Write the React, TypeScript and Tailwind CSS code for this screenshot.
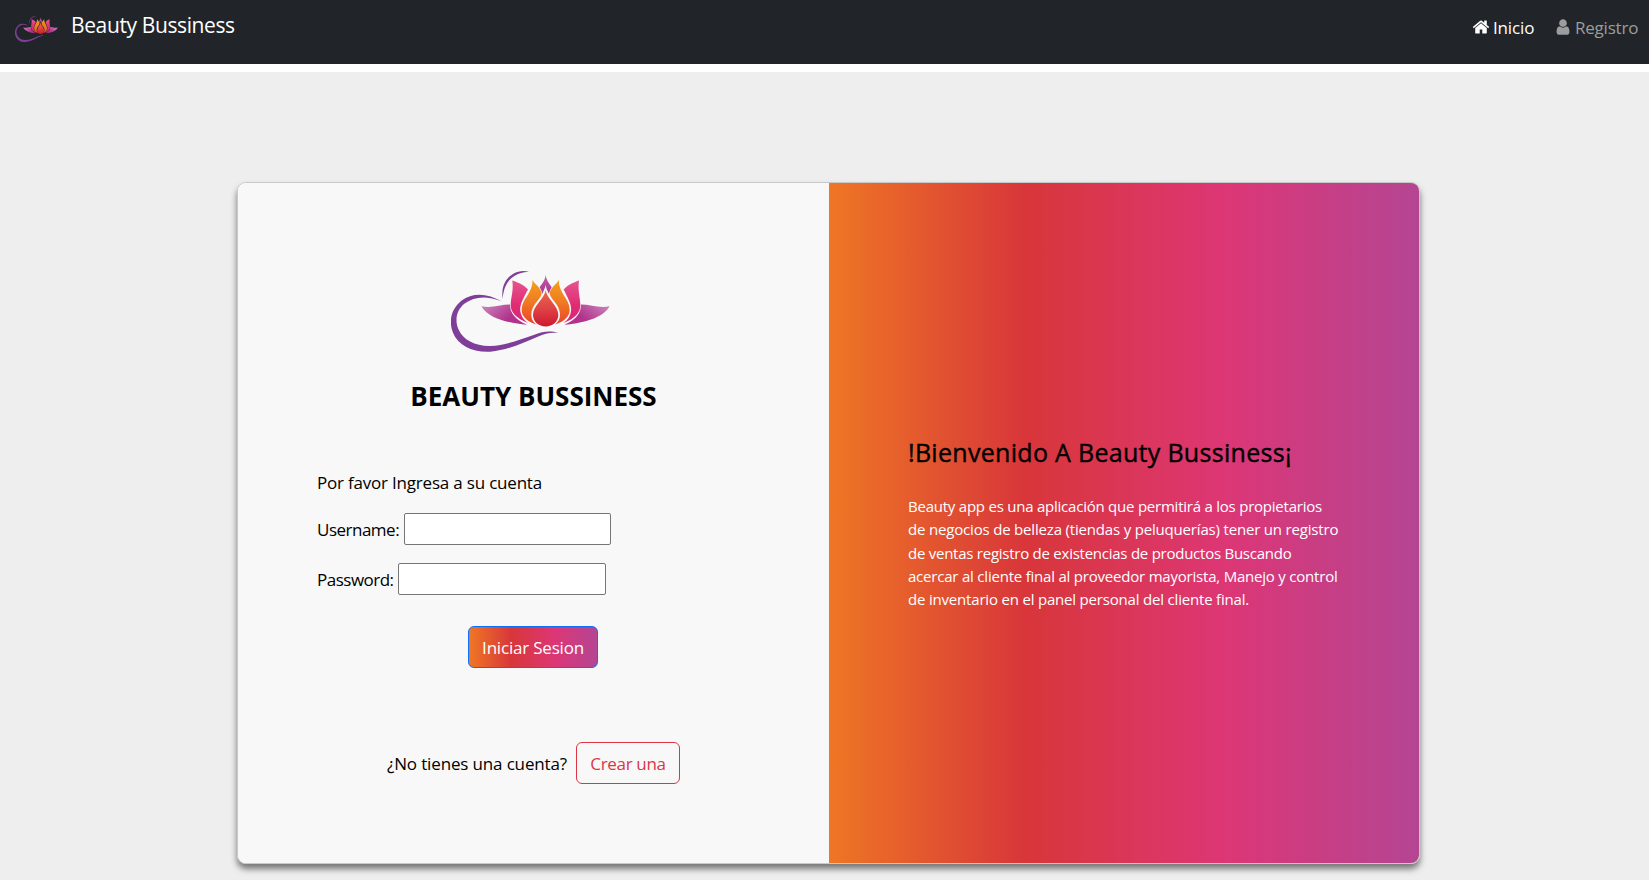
import React from "react";

function Lotus({ className, id }: { className: string; id: string }) {
  return (
    <svg className={className} viewBox="62 60 477 247" preserveAspectRatio="none" aria-hidden="true">
      <defs>
        <linearGradient id={id + "leafL"} x1="0" y1="0" x2="1" y2="0.5">
          <stop offset="0" stopColor="#cb8abd" />
          <stop offset="0.75" stopColor="#b2328d" />
        </linearGradient>
        <linearGradient id={id + "leafR"} x1="1" y1="0" x2="0" y2="0.5">
          <stop offset="0" stopColor="#cb8abd" />
          <stop offset="0.75" stopColor="#b2328d" />
        </linearGradient>
        <linearGradient id={id + "pink"} x1="0" y1="0" x2="0" y2="1">
          <stop offset="0" stopColor="#e6558f" />
          <stop offset="0.6" stopColor="#e02a72" />
          <stop offset="1" stopColor="#d9287c" />
        </linearGradient>
        <linearGradient id={id + "orange"} x1="0" y1="0" x2="0" y2="1">
          <stop offset="0" stopColor="#f5a11b" />
          <stop offset="0.5" stopColor="#f07a22" />
          <stop offset="1" stopColor="#e8432b" />
        </linearGradient>
        <linearGradient id={id + "red"} x1="0" y1="0" x2="0" y2="1">
          <stop offset="0" stopColor="#ea6a4a" />
          <stop offset="0.5" stopColor="#de4444" />
          <stop offset="1" stopColor="#cf1730" />
        </linearGradient>
        <linearGradient id={id + "top"} x1="0" y1="0" x2="0" y2="1">
          <stop offset="0" stopColor="#c063a5" />
          <stop offset="1" stopColor="#a9358f" />
        </linearGradient>
      </defs>
      <path d="M215 155 C172 129 126 127 94 152 C62 177 54 216 68 249 C83 288 128 309 180 306 C232 301 280 279 322 261 C345 251 362 247 384 250 C360 242 338 245 314 254 C265 271 226 287 180 289 C136 290 98 272 84 238 C72 208 80 179 103 161 C133 139 170 137 215 155Z" fill="#7f3f98" />
      <path d="M217 147 C212 112 225 84 249 71 C264 63 278 61 296 65 C276 66 262 71 251 79 C230 93 220 113 217 147Z" fill="#7f3f98" />
      <path d="M153 169 C184 176 209 164 239 164 C239 190 254 209 290 225 C230 219 174 205 153 169Z" fill={"url(#" + id + "leafL)"} />
      <path d="M538 169 C507 176 482 164 452 164 C452 190 439 209 402 225 C461 219 517 205 538 169Z" fill={"url(#" + id + "leafR)"} />
      <path d="M246 92 C265 99 279 104 293 119 C281 142 267 164 270 184 C273 203 283 211 293 220 C260 207 240 188 241 165 C242 139 250 125 246 92Z" fill={"url(#" + id + "pink)"} />
      <path d="M446 92 C428 99 414 104 400 119 C411 142 425 164 422 184 C419 203 410 211 400 220 C433 207 451 188 450 165 C449 139 442 125 446 92Z" fill={"url(#" + id + "pink)"} />
      <path d="M346 73 C346 90 359 103 364 112 C360 119 357 125 356 132 C352 123 347 116 346 105 C344 116 339 123 336 132 C335 125 332 119 328 112 C334 103 346 90 346 73Z" fill={"url(#" + id + "top)"} />
      <path d="M307 89 C311 102 328 108 334 128 C335 148 303 162 303 194 C303 210 310 218 319 225 C287 213 273 198 274 178 C275 146 307 130 307 89Z" fill={"url(#" + id + "orange)"} />
      <path d="M385 89 C381 102 364 108 358 128 C357 148 389 162 389 194 C389 210 382 218 373 225 C405 213 419 198 418 178 C417 146 385 130 385 89Z" fill={"url(#" + id + "orange)"} />
      <path d="M346 121 C349 146 384 168 384 195 C384 216 367 230 346 230 C325 230 308 216 308 195 C308 168 343 146 346 121Z" fill={"url(#" + id + "red)"} />
    </svg>
  );
}

function HomeIcon() {
  return (
    <svg className="size-[18px] fill-current" viewBox="0 0 1792 1792" aria-hidden="true">
      <path d="M1472 992v480q0 26-19 45t-45 19h-384v-384h-256v384h-384q-26 0-45-19t-19-45v-480q0-1 .5-3t.5-3l575-474 575 474q1 2 1 6zm223-69l-62 74q-8 9-21 11h-3q-13 0-21-7l-692-577-692 577q-12 8-24 7-13-2-21-11l-62-74q-8-10-7-23.5t11-21.5l719-599q32-26 76-26t76 26l244 204v-195q0-14 9-23t23-9h192q14 0 23 9t9 23v408l219 182q10 8 11 21.5t-7 23.5z" />
    </svg>
  );
}

function UserIcon() {
  return (
    <svg className="size-[18px] fill-current" viewBox="0 0 1792 1792" aria-hidden="true">
      <path d="M1536 1399q0 109-62.5 187t-150.5 78h-854q-88 0-150.5-78t-62.5-187q0-85 8.5-160.5t31.5-152 58.5-131 94-89 134.5-34.5q131 128 313 128t313-128q76 0 134.5 34.5t94 89 58.5 131 31.5 152 8.5 160.5zm-256-887q0 159-112.5 271.5t-271.5 112.5-271.5-112.5-112.5-271.5 112.5-271.5 271.5-112.5 271.5 112.5 112.5 271.5z" />
    </svg>
  );
}

function Navbar() {
  return (
    <nav className="flex h-16 items-start bg-[#212529] whitespace-nowrap">
      <Lotus id="nav" className="mt-4 ml-[15px] h-[26px] w-[43px]" />
      <a className="mt-[9px] ml-[13px] text-[21px] leading-8 tracking-[-0.38px] text-white">Beauty Bussiness</a>
      <div className="mt-[18px] ml-auto flex text-[17px] leading-[19px]">
        <a className="flex w-[82px] gap-[3px] tracking-[-0.15px] text-white">
          <HomeIcon />
          <span>Inicio</span>
        </a>
        <a className="flex w-[95px] gap-[3px] tracking-[-0.22px] text-[#9b9d9e]">
          <UserIcon />
          <span>Registro</span>
        </a>
      </div>
    </nav>
  );
}

function LoginPanel() {
  return (
    <section className="flex w-[591px] flex-col bg-[#f8f8f8] pt-[87px] text-[17px] whitespace-nowrap">
      <Lotus id="main" className="ml-[213px] h-[82px] w-[159px]" />
      <h4 className="mt-[28px] text-center text-[26px] leading-8 font-bold">BEAUTY BUSSINESS</h4>
      <form className="mt-[57px] flex flex-col pl-[79px]">
        <p className="leading-[27px] tracking-[-0.2px]">Por favor Ingresa a su cuenta</p>
        <div className="mt-[17px] flex h-8 items-center">
          <label className="w-[87px] pt-[2px] tracking-[-0.5px]">Username:</label>
          <input className="h-8 w-[207px] rounded-[2px] border border-[#767676] bg-white" />
        </div>
        <div className="mt-[18px] flex h-8 items-center">
          <label className="w-[81px] pt-[2px] tracking-[-0.5px]">Password:</label>
          <input type="password" className="h-8 w-[208px] rounded-[2px] border border-[#767676] bg-white" />
        </div>
        <button type="button" className="mt-[31px] ml-[151px] h-[42px] w-[130px] rounded-[6px] border border-[#0d6efd] bg-[linear-gradient(to_right,#ee7724,#d8363a,#dd3675,#b44593)] pt-px tracking-[-0.2px] text-white">
          Iniciar Sesion
        </button>
      </form>
      <div className="mt-[74px] flex items-center pl-[149px]">
        <p className="w-[189px] pt-px tracking-[-0.15px]">¿No tienes una cuenta?</p>
        <button type="button" className="h-[42px] w-[104px] rounded-[6px] border border-[#dc3545] pt-px tracking-[-0.32px] text-[#dc3545]">
          Crear una
        </button>
      </div>
    </section>
  );
}

function WelcomePanel() {
  return (
    <section className="flex-1 bg-[linear-gradient(to_right,#ee7724,#d8363a,#dd3675,#b44593)] pt-[253px] pl-[79px] whitespace-nowrap">
      <h4 className="text-[25px] leading-8 font-medium tracking-[0.3px] [-webkit-text-stroke:0.4px_black]">!Bienvenido A Beauty Bussiness¡</h4>
      <p className="mt-[27px] text-[15px] leading-[23.25px] text-white">
        <span className="block tracking-[-0.23px]">Beauty app es una aplicación que permitirá a los propietarios</span>
        <span className="block tracking-[-0.18px]">de negocios de belleza (tiendas y peluquerías) tener un registro</span>
        <span className="block tracking-[-0.25px]">de ventas registro de existencias de productos Buscando</span>
        <span className="block tracking-[-0.21px]">acercar al cliente final al proveedor mayorista, Manejo y control</span>
        <span className="block tracking-[-0.19px]">de inventario en el panel personal del cliente final.</span>
      </p>
    </section>
  );
}

export default function App() {
  return (
    <div className="flex h-[880px] flex-col overflow-hidden bg-white font-['Open_Sans','Noto_Sans',sans-serif] text-black">
      <Navbar />
      <main className="mt-2 flex-1 bg-[#eee] pt-[110px] pl-[237px]">
        <div className="flex h-[682px] w-[1183px] overflow-hidden rounded-[9px] border border-[#c9c9c9] shadow-[0_5px_6px_0px_rgba(0,0,0,0.5)]">
          <LoginPanel />
          <WelcomePanel />
        </div>
      </main>
    </div>
  );
}
